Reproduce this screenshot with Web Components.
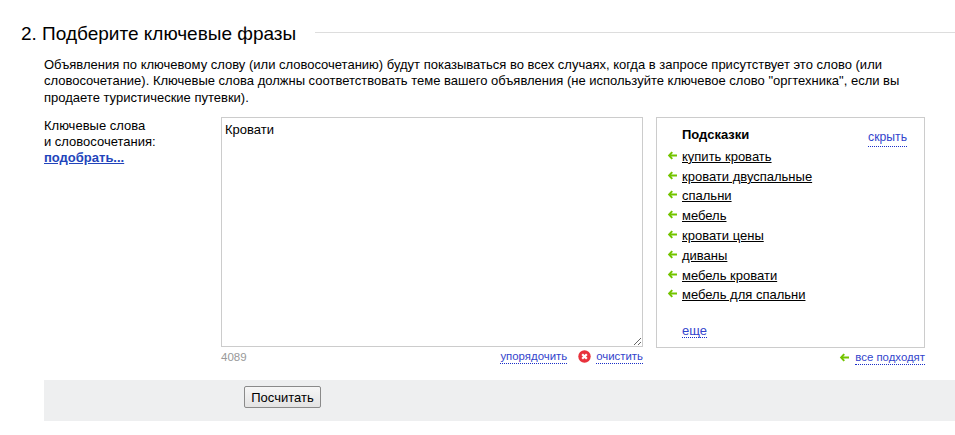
<!DOCTYPE html>
<html>
<head>
<meta charset="utf-8">
<title>Ключевые фразы</title>
<style>
    html, body { margin: 0; padding: 0; background: #fff; }
    body { font: 13px/16px "Liberation Sans", Arial, sans-serif; color: #000; }
</style>
</head>
<body>
<phrase-step></phrase-step>

<script>
const ARROW = `<svg width="11" height="9" viewBox="0 0 11 9"><path d="M4.5 0.5 L0.8 4.5 L4.5 8.5 L6 7.2 L4.2 5.6 L10 5.6 L10 3.4 L4.2 3.4 L6 1.8 Z" fill="#73c400"/></svg>`;

class DotLink extends HTMLElement {
    constructor() {
        super();
        this.attachShadow({mode: 'open'});
        this.shadowRoot.innerHTML = `
<style>
    :host{
        display: inline-block;
        color: #3344cc;
        border-bottom: 1px dotted #1a2fc8;
        line-height: 13px;
        font-size: 11.4px;
        cursor: pointer;
    }
    :host([big]){
        font-size: 13px;
    }
    :host([mid]){
        font-size: 12.2px;
    }
</style>
<slot></slot>`;
    }
}

class HintItem extends HTMLElement {
    constructor() {
        super();
        this.attachShadow({mode: 'open'});
        this.shadowRoot.innerHTML = `
<style>
    :host{
        display: flex;
        align-items: center;
        height: 19.8px;
    }
    .arrow{
        display: flex;
        width: 15px;
        margin-top: -3px;
    }
    a{
        color: #000;
        text-decoration: underline;
        cursor: pointer;
    }
</style>
<span class="arrow">${ARROW}</span><a><slot></slot></a>`;
    }
}

class HintsPanel extends HTMLElement {
    constructor() {
        super();
        this.attachShadow({mode: 'open'});
        this.shadowRoot.innerHTML = `
<style>
    :host{
        display: block;
        box-sizing: border-box;
        width: 269px;
        height: 231px;
        border: 1px solid #cccccc;
        padding: 9px 17px 0 10px;
    }
    .head{
        display: flex;
        justify-content: space-between;
        padding-left: 15px;
        height: 20px;
    }
    .head dot-link{ margin-top: 4px; }
    .more{
        padding-left: 15px;
        margin-top: 18px;
    }
</style>
<div class="head"><b>Подсказки</b><dot-link mid>скрыть</dot-link></div>
<slot></slot>
<div class="more"><dot-link big>еще</dot-link></div>`;
    }
}

class PhraseStep extends HTMLElement {
    constructor() {
        super();
        this.attachShadow({mode: 'open'});
        this.shadowRoot.innerHTML = `
<style>
    :host{
        display: block;
        padding: 23px 0 0 21px;
    }
    .title{
        display: flex;
        align-items: center;
        gap: 19px;
        height: 22px;
        font-size: 19px;
    }
    .title hr{
        flex: 1;
        height: 1px;
        margin: 0 0 3px;
        border: 0;
        background: #dddddd;
    }
    .body{
        margin-left: 23px;
    }
    .desc{
        margin: 12px 0 0;
        width: 870px;
        height: 59px;
        line-height: 16.4px;
    }
    .row{
        display: grid;
        grid-template-columns: 164px 422px 269px;
        column-gap: 13px;
        margin-top: 1px;
    }
    .label{
        padding-top: 1px;
    }
    .label a{
        color: #2244bb;
        font-weight: bold;
        text-decoration: underline;
        cursor: pointer;
    }
    textarea{
        display: block;
        box-sizing: border-box;
        width: 422px;
        height: 230px;
        margin: 0;
        padding: 4px 3px 3px;
        border: 1px solid #cccccc;
        font: 13px/16px "Liberation Sans", Arial, sans-serif;
        outline: 0;
    }
    .under{
        display: flex;
        align-items: center;
        height: 19px;
        font-size: 11.5px;
    }
    .count{
        color: #999999;
        margin-right: auto;
    }
    .clear{
        display: flex;
        margin: 0 5px 0 11px;
    }
    .under2{
        display: flex;
        justify-content: flex-end;
        align-items: center;
        gap: 5px;
        height: 19px;
    }
    .under2 span{
        display: flex;
    }
    .foot{
        height: 41px;
        margin-top: 13px;
        background: #eeeff0;
        padding: 6px 0 0 200px;
        box-sizing: border-box;
    }
    button{
        display: block;
        box-sizing: border-box;
        width: 77px;
        height: 22px;
        padding: 0;
        border: 1px solid #8a8a8a;
        border-radius: 2px;
        background: linear-gradient(#f6f6f6, #e3e3e3);
        font: 13px "Liberation Sans", Arial, sans-serif;
        color: #000;
    }
</style>
<div class="title"><span>2. Подберите ключевые фразы</span><hr></div>
<div class="body">
    <p class="desc">Объявления по ключевому слову (или словосочетанию) будут показываться во всех случаях, когда в запросе присутствует это слово (или словосочетание). Ключевые слова должны соответствовать теме вашего объявления (не используйте ключевое слово "оргтехника", если вы продаете туристические путевки).</p>
    <div class="row">
        <div class="label">Ключевые слова<br>и словосочетания:<br><a>подобрать...</a></div>
        <div>
            <textarea>Кровати</textarea>
            <div class="under">
                <span class="count">4089</span>
                <dot-link>упорядочить</dot-link>
                <span class="clear"><svg width="13" height="13" viewBox="0 0 13 13"><circle cx="6.5" cy="6.5" r="6.2" fill="#e8323c"/><path d="M4.2 4.2 L8.8 8.8 M8.8 4.2 L4.2 8.8" stroke="#fff" stroke-width="2.2"/></svg></span>
                <dot-link>очистить</dot-link>
            </div>
        </div>
        <div>
            <hints-panel>
                <hint-item>купить кровать</hint-item>
                <hint-item>кровати двуспальные</hint-item>
                <hint-item>спальни</hint-item>
                <hint-item>мебель</hint-item>
                <hint-item>кровати цены</hint-item>
                <hint-item>диваны</hint-item>
                <hint-item>мебель кровати</hint-item>
                <hint-item>мебель для спальни</hint-item>
            </hints-panel>
            <div class="under2"><span>${ARROW}</span><dot-link>все подходят</dot-link></div>
        </div>
    </div>
    <div class="foot"><button>Посчитать</button></div>
</div>`;
    }
}

customElements.define('dot-link', DotLink);
customElements.define('hint-item', HintItem);
customElements.define('hints-panel', HintsPanel);
customElements.define('phrase-step', PhraseStep);
</script>
</body>
</html>
